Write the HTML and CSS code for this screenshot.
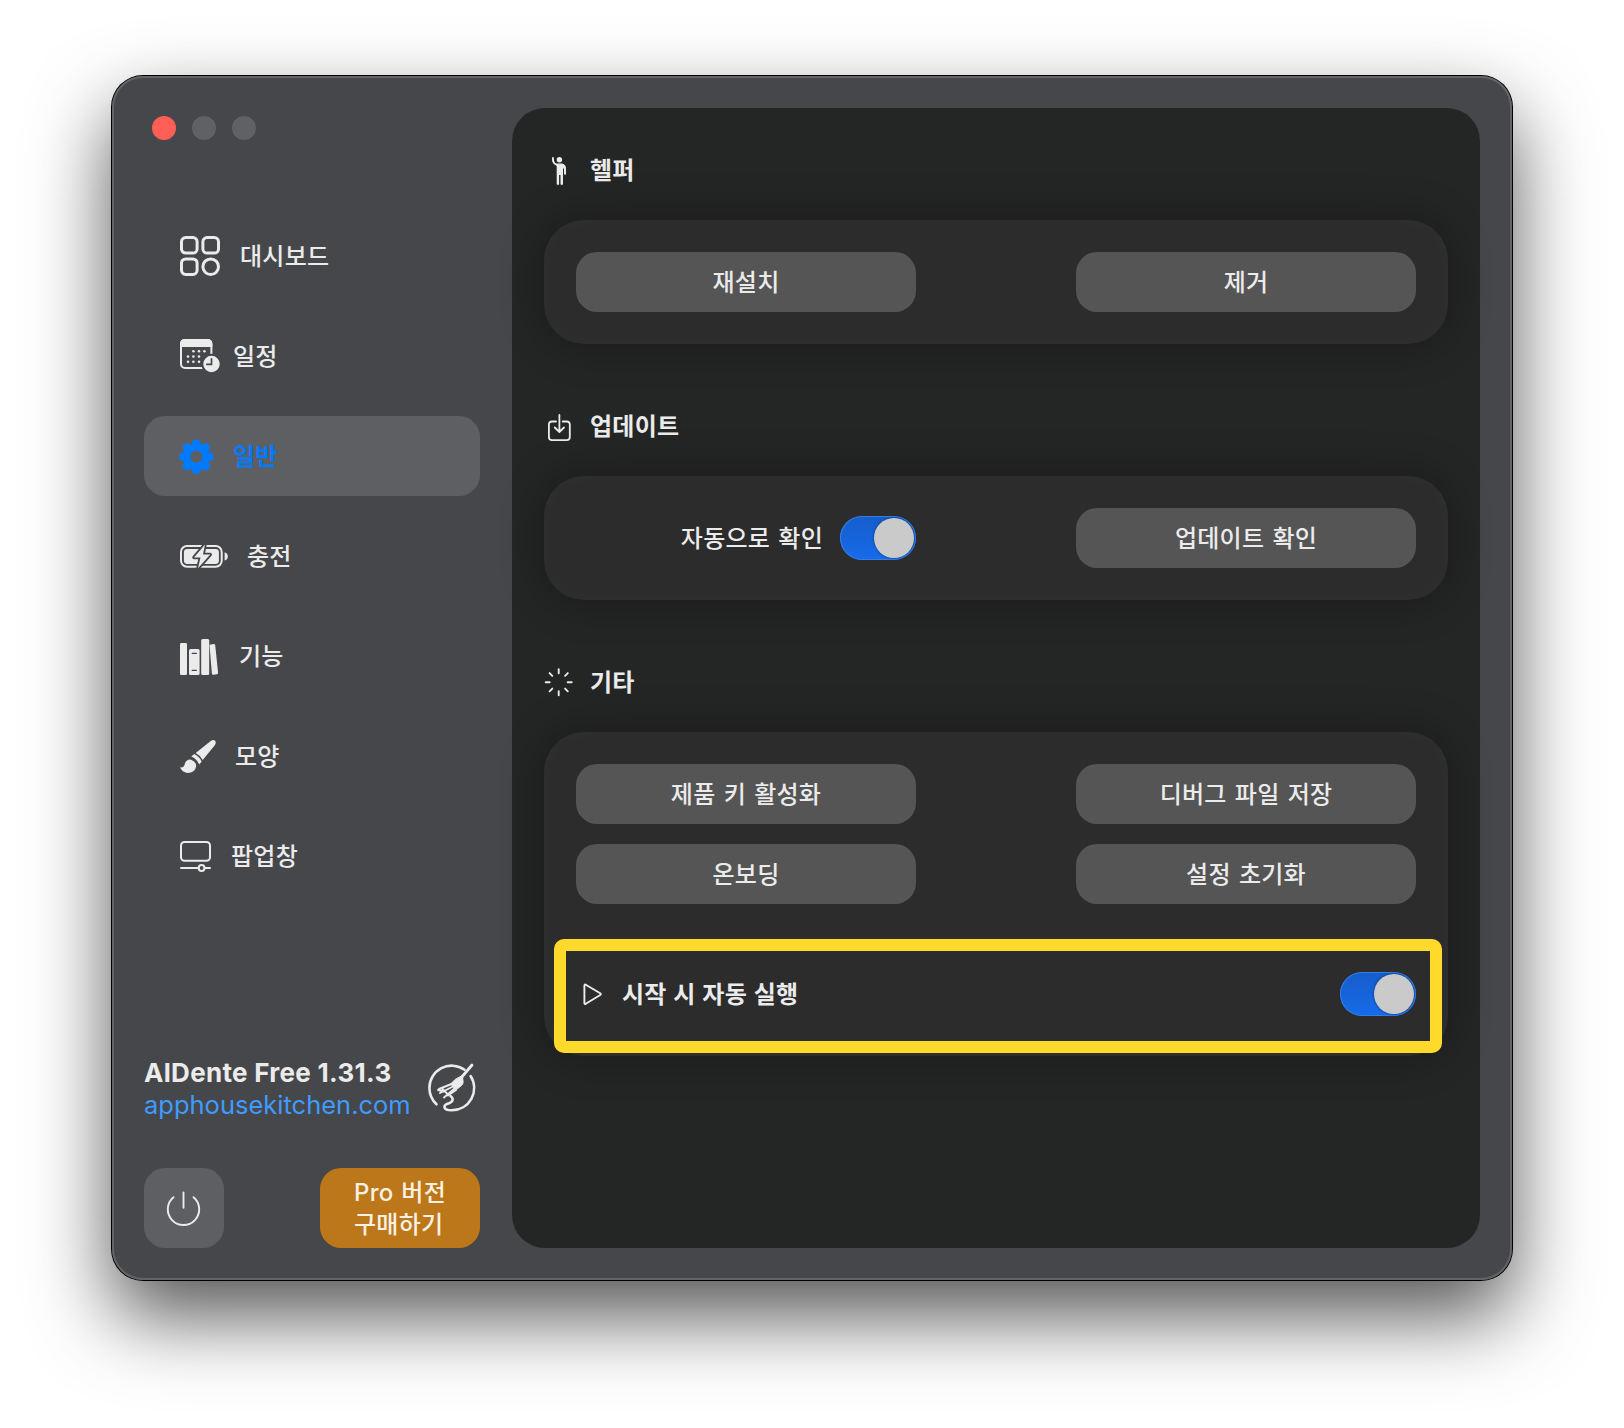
FILE: index.html
```html
<!DOCTYPE html>
<html lang="ko">
<head>
<meta charset="utf-8">
<title>AlDente</title>
<link rel="stylesheet" href="styles.css">
</head>
<body>
<main class="window">
  <aside class="sidebar">
    <div class="lights"><span class="light close"></span><span class="light"></span><span class="light"></span></div>
    <nav class="nav">
      <a class="item"><svg class="icon" width="40" height="40" viewBox="0 0 40 40" fill="none" stroke="currentColor" stroke-width="3"><rect x="1.5" y="1.5" width="15.600" height="15.600" rx="4.200"/><rect x="22.900" y="1.500" width="15.600" height="15.600" rx="4.200"/><rect x="1.500" y="22.900" width="15.600" height="15.600" rx="4.200"/><circle cx="30.700" cy="30.700" r="7.800"/></svg>대시보드</a>
      <a class="item"><svg class="icon" width="33" height="34" viewBox="0 0 33 34"><rect x="1" y="1" width="30.400" height="28" rx="4" fill="none" stroke="currentColor" stroke-width="2"/><path d="M0 8V5Q0 0 5 0H27.400Q32.400 0 32.400 5V8Z" fill="currentColor"/><g fill="currentColor"><circle cx="13.400" cy="12.200" r="1.300"/><circle cx="19" cy="12.200" r="1.300"/><circle cx="24.400" cy="12.200" r="1.300"/><circle cx="8" cy="17.500" r="1.300"/><circle cx="13.400" cy="17.500" r="1.300"/><circle cx="19" cy="17.500" r="1.300"/><circle cx="8" cy="22.800" r="1.300"/><circle cx="13.400" cy="22.800" r="1.300"/><circle cx="19" cy="22.800" r="1.300"/></g><circle cx="31.500" cy="25" r="9.200" fill="currentColor" stroke="#46474a" stroke-width="2"/><path d="M31.500 19.800V25.300H26.800" fill="none" stroke="#46474a" stroke-width="1.700" stroke-linecap="round"/></svg>일정</a>
      <a class="item active"><svg class="icon" width="33" height="34" viewBox="0 -.8 33 34"><g transform="translate(16.300 17)"><circle r="9.600" fill="none" stroke="currentColor" stroke-width="7"/><g fill="currentColor"><path id="tooth" d="M-4.800 -12L-3.500 -16Q-3 -17 -2 -17H2Q3 -17 3.500 -16L4.800 -12Z"/><use href="#tooth" transform="rotate(45)"/><use href="#tooth" transform="rotate(90)"/><use href="#tooth" transform="rotate(135)"/><use href="#tooth" transform="rotate(180)"/><use href="#tooth" transform="rotate(225)"/><use href="#tooth" transform="rotate(270)"/><use href="#tooth" transform="rotate(315)"/></g></g></svg>일반</a>
      <a class="item"><svg class="icon" width="47" height="23" viewBox="0 0 47 23"><rect x="1" y="1" width="40.700" height="20.700" rx="6" fill="none" stroke="currentColor" stroke-width="2"/><rect x="3.900" y="3.900" width="35" height="15" rx="3.400" fill="currentColor"/><path d="M44.600 7.300Q47.800 8.300 47.800 11.400T44.600 15.500Z" fill="currentColor"/><path d="M25 -.5L14 12.500H20.500L18 23.200L30.200 9.500H23Z" fill="currentColor" stroke="#46474a" stroke-width="3.600" stroke-linejoin="round" paint-order="stroke"/></svg>충전</a>
      <a class="item"><svg class="icon" width="39" height="36" viewBox="0 -1 39 36" fill="currentColor"><rect y="4" width="7" height="32" rx="1.300"/><rect x="9" y="10" width="10.600" height="26" rx="1.600"/><path d="M12.200 14.300H16.400M12.200 31.300H16.400" stroke="#46474a" stroke-width="1.300" stroke-linecap="round"/><rect x="21.200" width="8" height="36" rx="1.500"/><path d="M29.500 5.800L33.700 5.100Q35 5 35.200 6.300L38.100 33.700Q38.100 35 37 35.200L33.500 35.800Q32 35.900 31.900 34.700Z"/></svg>기능</a>
      <a class="item"><svg class="icon" width="35" height="33" viewBox="0 0 35 33" fill="currentColor"><path d="M15.700 13L31 .8Q33.700-.9 35.300 1Q36.500 2.500 35 5L22.700 20.100Q20.500 15.500 15.700 13Z"/><path d="M11.300 16.600L14.200 14.100Q19.600 16.800 21.700 21.500L19.200 24.500Q16.800 18.800 11.300 16.600Z"/><path d="M0 27.300Q3.700 28 4.700 24.200Q6 19.200 10.500 19.400Q16.200 21.600 16.200 26Q15.200 33 7.500 33Q2 32.200 0 27.300Z"/></svg>모양</a>
      <a class="item"><svg class="icon" width="31" height="31" viewBox="0 0 31 31" fill="none" stroke="currentColor" stroke-width="2" stroke-linecap="round"><rect x="1" y="1" width="29" height="18.800" rx="3.500"/><path d="M1 27H18.500M24.500 27H30"/><circle cx="21.600" cy="27" r="2.900"/></svg>팝업창</a>
    </nav>
    <div class="about">
      <div><div class="version">AlDente Free 1.31.3</div><a class="link">apphousekitchen.com</a></div>
      <svg width="64" height="64" viewBox="0 0 64 64" fill="none" stroke="currentColor" stroke-linecap="round" stroke-linejoin="round"><path d="M16.500 48.300A22.300 22.300 0 0 1 9.400 32A22.300 22.300 0 0 1 44.500 13.700M50.600 20A22.300 22.300 0 0 1 31.700 54.300C23.500 54.600 22.500 49.500 27.500 47.700C34 46 33.500 42 30.500 40" stroke-width="2.600"/><path d="M52 9L41 22" stroke-width="2.800"/><path d="M42.500 19.500L43.200 26Q43.500 28 41 30L36 34L30.500 28L35 23.500Q37 22 42.500 19.500Z" fill="currentColor" stroke-width=".8"/><path d="M31.500 28L19 33M33 30.500L20 37M34.500 32.500L24 41.500M36 34L28 39.500M18 34L24 35.500M22 32.500L28 38.500" stroke-width="1.900"/></svg>
    </div>
    <div class="actions">
      <button class="power"><svg width="40" height="40" viewBox="0 0 40 40" fill="none" stroke="currentColor" stroke-width="1.900" stroke-linecap="round"><path d="M19.500 4.500V19.700M9.500 9.200A15.700 15.700 0 1 0 29.500 9.200"/></svg></button>
      <button class="pro"><span>Pro 버전<br>구매하기</span></button>
    </div>
  </aside>
  <section class="panel">
    <section class="group">
      <h2 class="heading"><svg width="32" height="32" viewBox="0 0 32 32" fill="none" stroke="currentColor" stroke-linecap="round" stroke-linejoin="round"><circle cx="15.400" cy="5.700" r="2.700" fill="currentColor" stroke="none"/><path d="M9 4V6.500Q9.300 9.300 13 11" stroke-width="1.900"/><path d="M12.500 10.100H18Q21.300 11 21.300 14V19.800" stroke-width="1.200"/><path d="M12.700 10.200H18Q21.500 11 21.800 15V20.200Q20.800 21.200 20 20V14.500H19V30.200Q17.700 31.600 16.500 30.200V21H15.100V30.200Q14 31.600 12.700 30.200Z" fill="currentColor" stroke="none"/></svg>헬퍼</h2>
      <div class="card"><div class="grid"><button class="btn">재설치</button><button class="btn">제거</button></div></div>
    </section>
    <section class="group">
      <h2 class="heading"><svg width="32" height="32" viewBox="0 0 32 32" fill="none" stroke="currentColor" stroke-width="1.800" stroke-linecap="round" stroke-linejoin="round"><path d="M12 11.500H8Q4.900 11.500 4.900 14.600V27Q4.900 30.100 8 30.100H22.700Q25.800 30.100 25.800 27V14.600Q25.800 11.500 22.700 11.500H18.700M15.400 5V21.700M10.800 17.500L15.400 22L20 17.500"/></svg>업데이트</h2>
      <div class="card"><div class="grid"><label class="auto"><span class="auto-label">자동으로 확인</span><span class="toggle"></span></label><button class="btn">업데이트 확인</button></div></div>
    </section>
    <section class="group">
      <h2 class="heading"><svg width="32" height="32" viewBox="0 0 32 32" stroke="currentColor" stroke-width="1.900" stroke-linecap="round"><path d="M14.700 3.200V7.200M14.700 25.200V29.200M1.700 16.200H5.700M23.700 16.200H27.700M5.600 7.100L8.300 9.800M21.100 22.600L23.800 25.300M5.600 25.300L8.300 22.600M21.100 9.800L23.800 7.100"/></svg>기타</h2>
      <div class="card other">
        <div class="grid"><button class="btn">제품 키 활성화</button><button class="btn">디버그 파일 저장</button><button class="btn">온보딩</button><button class="btn">설정 초기화</button></div>
        <div class="launch"><svg width="32" height="32" viewBox="0 0 32 32" fill="none" stroke="currentColor" stroke-width="1.900" stroke-linejoin="round"><path d="M8.400 7.500Q8.400 6 9.800 6.700L24.200 15.200Q25.500 16.100 24.200 17L9.800 25.800Q8.400 26.500 8.400 25Z"/></svg><span class="launch-label">시작 시 자동 실행</span><span class="toggle"></span></div>
        <div class="highlight"></div>
      </div>
    </section>
  </section>
</main>
</body>
</html>
```
FILE: styles.css
```css
* { box-sizing: border-box; }
body {
  margin: 0;
  padding: 76px 112px;
  height: 1428px;
  overflow: hidden;
  background: #fff;
  color: #ebebeb;
  font: 500 24px/32px "Noto Sans CJK KR", sans-serif;
  letter-spacing: .25px;
  word-spacing: 1.2px;
}
button { border: 0; padding: 0; color: inherit; font: inherit; letter-spacing: inherit; word-spacing: inherit; }
.window {
  position: relative;
  display: flex;
  width: 1400px;
  height: 1204px;
  padding: 32px 32px 32px 0;
  border-radius: 31px;
  background: #46474a;
  box-shadow: inset 0 0 0 2px #636466, 0 0 0 1px #000, 0 36px 80px rgba(0, 0, 0, .67);
}
.sidebar { display: flex; flex-direction: column; width: 400px; padding: 8px 32px 0; }
.lights { display: flex; gap: 16px; padding-left: 8px; }
.light { width: 24px; height: 24px; border-radius: 50%; background: #606164; }
.close { background: #ff5f57; }
.nav { display: flex; flex-direction: column; gap: 20px; margin-top: 76px; }
.item { display: flex; align-items: center; gap: 20px; height: 80px; padding: 0 0 2px 36px; border-radius: 21px; }
.icon { overflow: visible; flex: none; margin-top: 2px; }
.active { background: #5e5f62; color: #007aff; font-weight: 700; }
.about { display: flex; justify-content: space-between; margin-top: auto; padding-bottom: 47px; }
.about svg { flex: none; margin: -1px -4px -1px -8px; }
.version, .link { display: block; font-family: Inter, "Noto Sans CJK KR", sans-serif; white-space: nowrap; }
.version { font-size: 26px; font-weight: 700; letter-spacing: .3px; word-spacing: 0; }
.link { color: #3f9bff; font-size: 25.5px; font-weight: 400; letter-spacing: 0; }
.actions { display: flex; justify-content: space-between; }
.power { display: flex; align-items: center; justify-content: center; width: 80px; height: 80px; border-radius: 21px; background: #5e5f62; }
.pro { display: flex; align-items: center; justify-content: center; width: 160px; height: 80px; padding-top: 2px; border-radius: 21px; background: #bc771a; color: #fbf1e3; font-family: Inter, "Noto Sans CJK KR", sans-serif; text-align: left; }
.panel { width: 968px; padding: 46px 32px; border-radius: 33px; background: #242625; }
.group + .group { margin-top: 66px; }
.heading { display: flex; align-items: center; gap: 14px; height: 32px; margin: 0 0 34px; padding-bottom: 2px; font-size: 24px; font-weight: 700; }
.heading svg { margin-top: 2px; }
.card {
  position: relative;
  padding: 32px;
  border-radius: 40px;
  background: #2c2c2c;
  box-shadow: 0 0 44px rgba(0, 0, 0, .32), inset 0 0 30px rgba(255, 255, 255, .018);
}
.grid { display: grid; grid-template-columns: 340px 340px; justify-content: space-between; gap: 20px 0; }
.btn { height: 60px; padding-bottom: 2px; border-radius: 21px; background: #555; text-align: center; }
.auto { display: flex; align-items: center; justify-content: flex-end; gap: 17px; }
.auto-label, .launch-label { padding-bottom: 2px; }
.toggle {
  display: flex;
  justify-content: flex-end;
  width: 76px;
  height: 44px;
  padding: 2px;
  border-radius: 22px;
  background: linear-gradient(#155dcb, #176bea);
  box-shadow: inset 0 0 0 1px #357ee6;
}
.toggle::after { content: ""; width: 40px; height: 40px; border-radius: 50%; background: #cacaca; box-shadow: 0 0 3px rgba(0, 0, 0, .45); }
.other { padding-bottom: 40px; }
.launch { display: flex; align-items: center; height: 44px; margin-top: 68px; font-weight: 700; word-spacing: -.3px; }
.launch-label { flex: 1; margin-left: 14px; }
.highlight { position: absolute; left: 10px; top: 207px; width: 888px; height: 114px; border: 12px solid #ffda2b; border-radius: 10px; }
```
